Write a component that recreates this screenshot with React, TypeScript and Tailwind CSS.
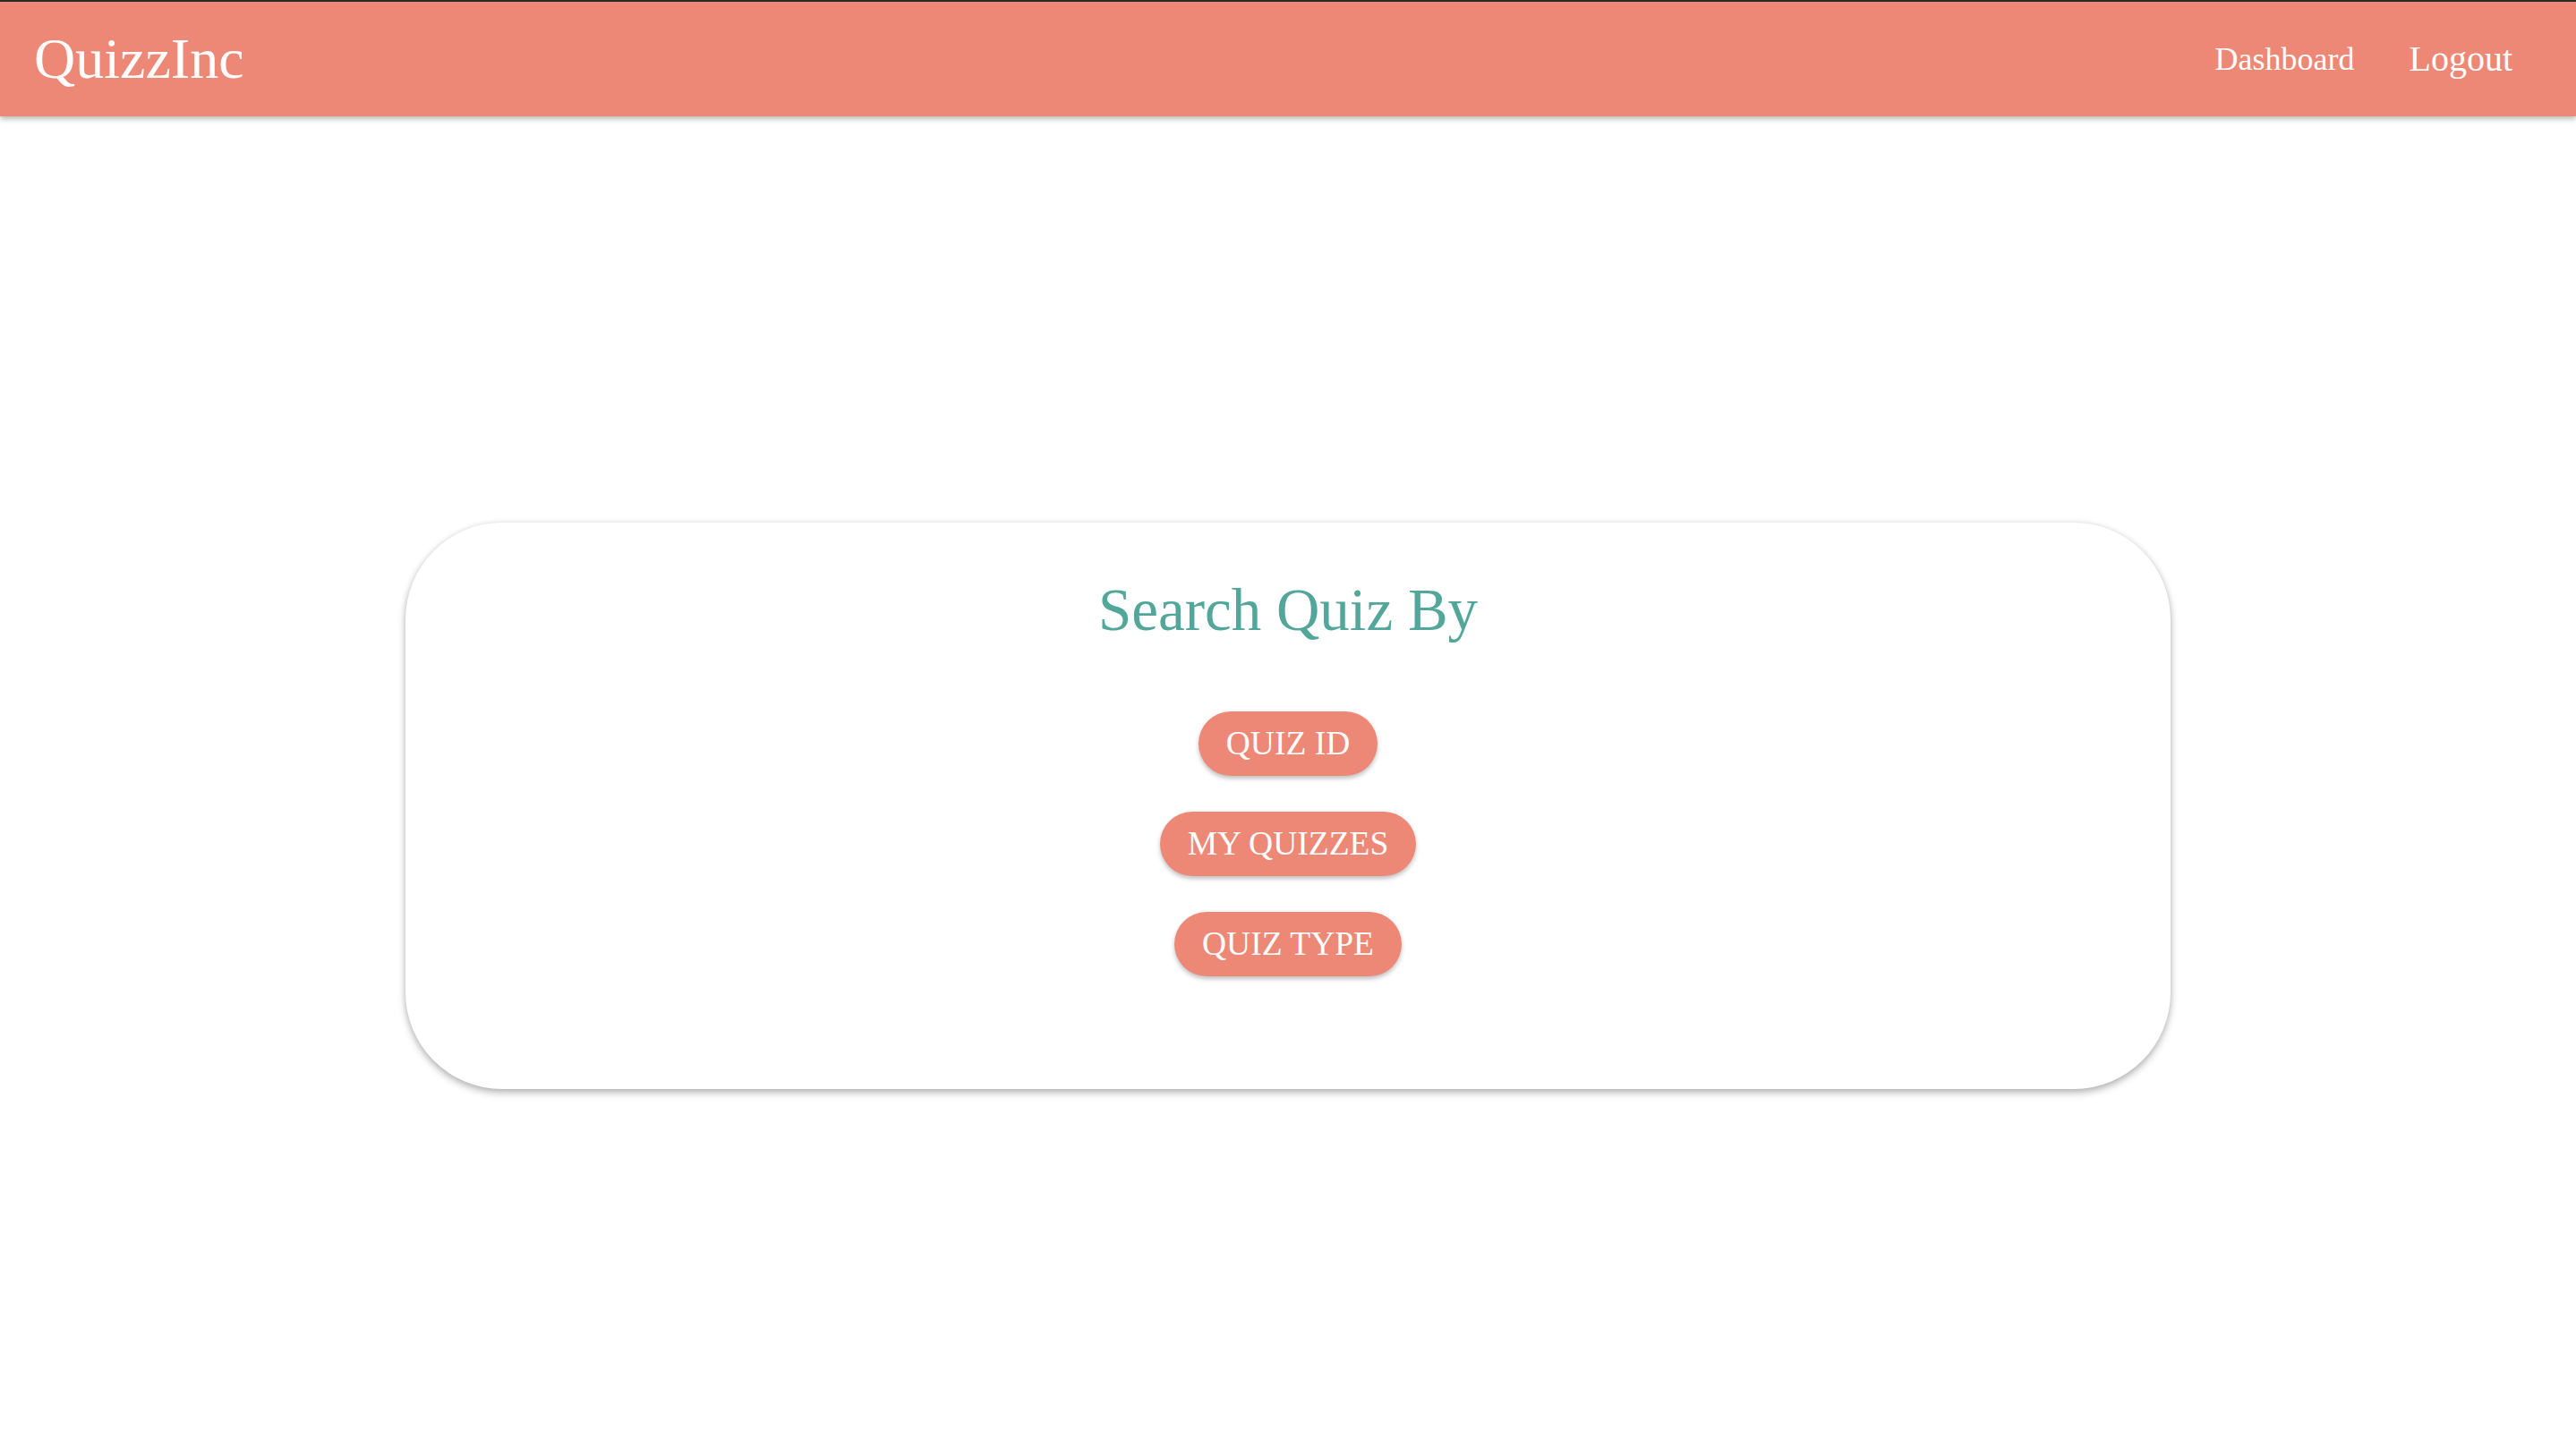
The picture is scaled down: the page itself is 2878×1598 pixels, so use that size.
import React from 'react'

const serif = { fontFamily: '"Liberation Serif", "Times New Roman", serif' }

const options = ['QUIZ ID', 'MY QUIZZES', 'QUIZ TYPE']

function Navbar() {
  return (
    <header className="flex h-[128px] items-center justify-between bg-[#ed8877] pl-[38px] pr-[71px] shadow-[0_3px_6px_rgba(0,0,0,0.28)]">
      <a className="text-[64px] leading-none text-white" href="#">QuizzInc</a>
      <nav className="flex items-center gap-[61px] text-white">
        <a className="text-[36px] leading-none" href="#">Dashboard</a>
        <a className="text-[40px] leading-none" href="#">Logout</a>
      </nav>
    </header>
  )
}

export default function App() {
  return (
    <div className="min-h-screen bg-white" style={serif}>
      <div className="h-[2px] bg-[#2b2b2b]" />
      <Navbar />
      <main className="pt-[454px] pb-[380px]">
        <div className="mx-auto w-[1972px] rounded-[108px] bg-white pt-[64px] pb-[126px] shadow-[0_4px_8px_rgba(0,0,0,0.28),0_0_6px_rgba(0,0,0,0.08)]">
          <h1 className="text-center text-[67px] leading-none text-[#52a69a]">Search Quiz By</h1>
          <div className="mt-[80px] flex flex-col items-center gap-[40px]">
            {options.map((label) => (
              <button
                key={label}
                type="button"
                className="flex h-[72px] items-center rounded-full bg-[#ed8877] px-[31px] text-[37.5px] text-white shadow-[0_3px_5px_rgba(0,0,0,0.25)]"
              >
                {label}
              </button>
            ))}
          </div>
        </div>
      </main>
    </div>
  )
}
